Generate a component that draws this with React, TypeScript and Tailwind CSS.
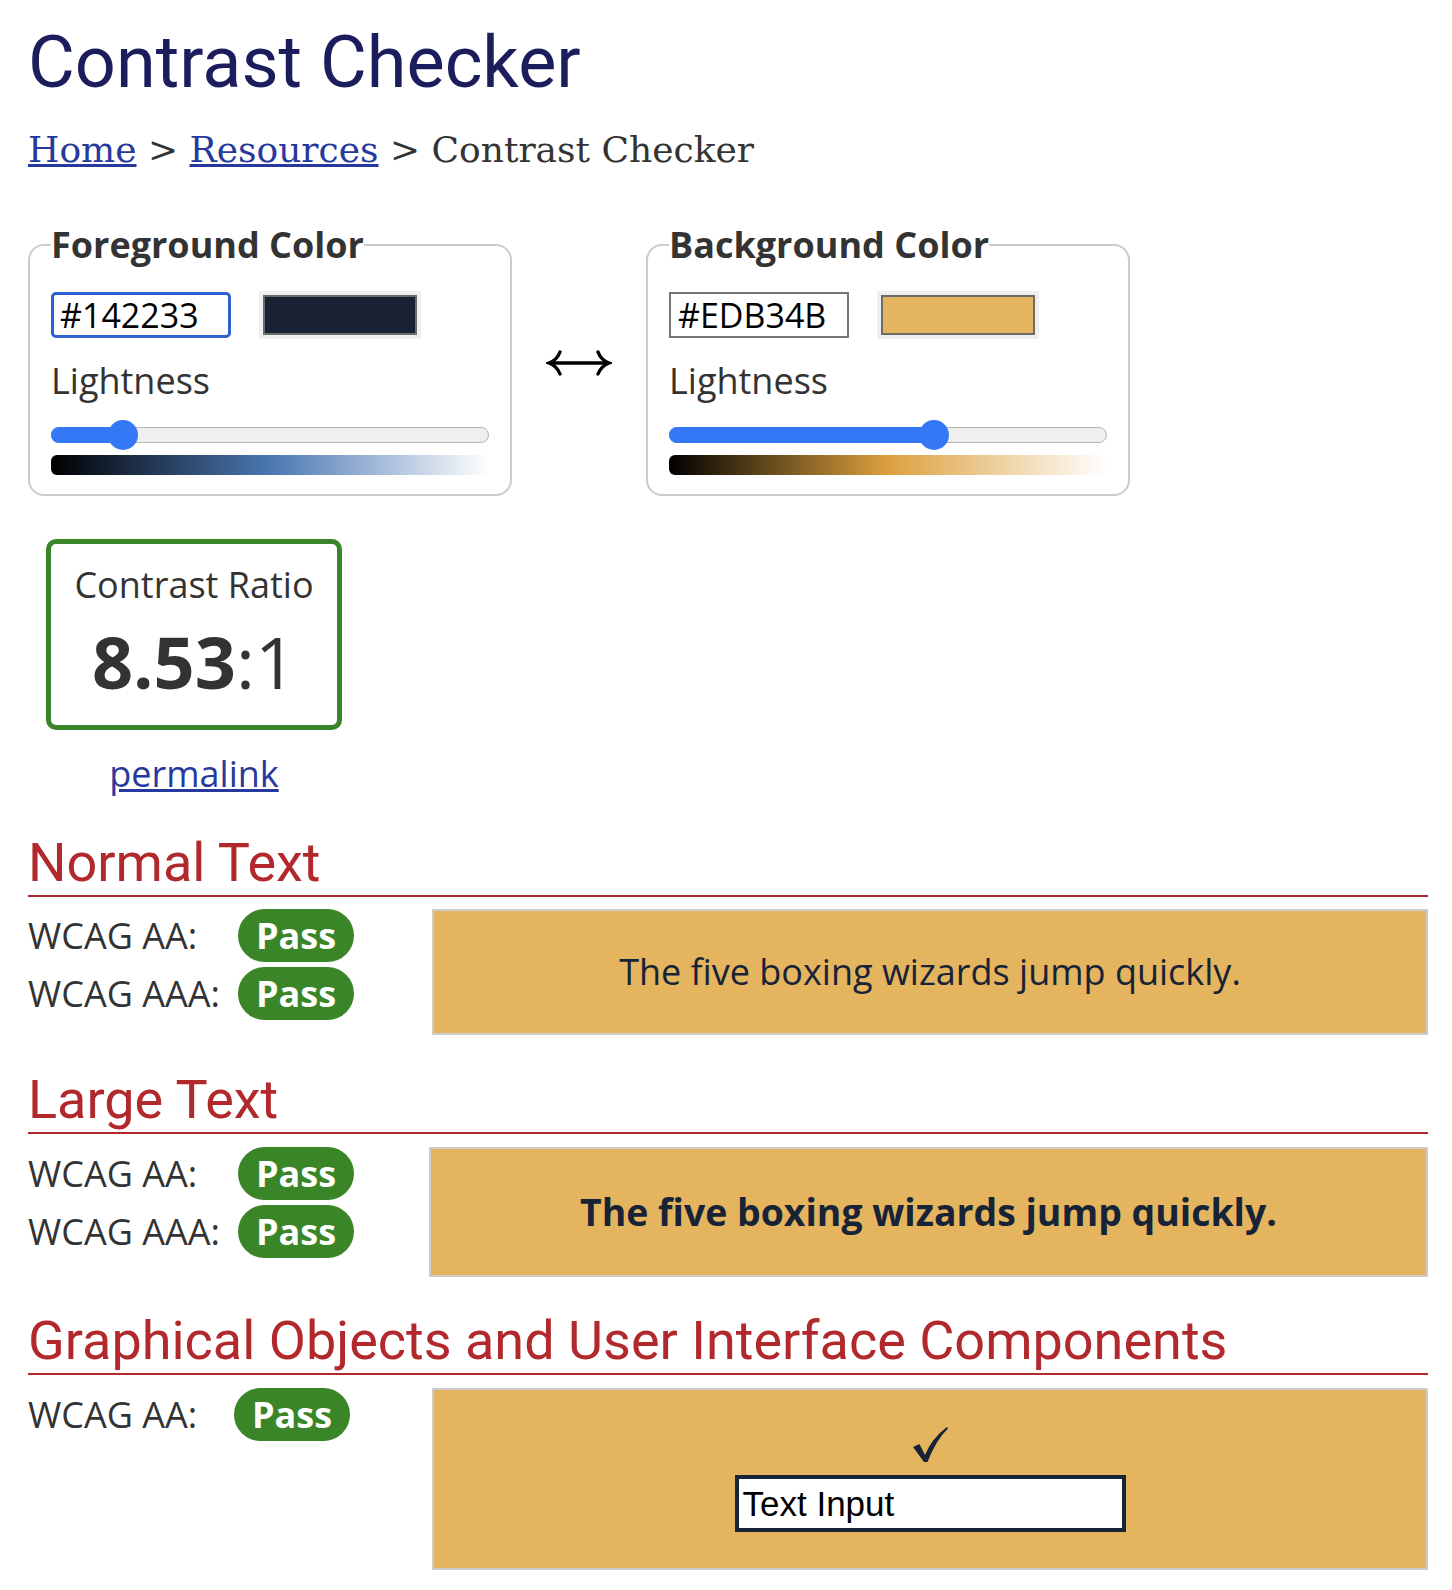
import React from 'react';

const fg = { hex: '#142233', swatch: '#182233', light: 0.139 };
const bg = { hex: '#EDB34B', swatch: '#e5b45f', light: 0.612 };

function Slider({ value }: { value: number }) {
  // track is 439px wide, thumb is 30px
  const center = 15 + (439 - 30) * value;
  return (
    <div className="relative h-[30px] w-full">
      <div className="absolute left-0 right-0 top-[7px] h-[16px] rounded-full border border-[#b4b4b4] bg-[#efefef]" />
      <div className="absolute left-0 top-[7px] h-[16px] rounded-full bg-[#3478f6]" style={{ width: center + 4 }} />
      <div className="absolute top-0 h-[30px] w-[30px] rounded-full bg-[#3478f6]" style={{ left: center - 15 }} />
    </div>
  );
}

function ArrowBoth() {
  return (
    <svg width="66" height="28" viewBox="0 0 66 28" fill="none" stroke="#000" strokeWidth="3.4" strokeLinecap="round">
      <path d="M4 14 H62" />
      <path d="M14 3 Q11 11 3 14 Q11 17 14 25" />
      <path d="M52 3 Q55 11 63 14 Q55 17 52 25" />
    </svg>
  );
}

function Check() {
  return (
    <svg width="38" height="37" viewBox="0 0 38 37">
      <path d="M2 21 L8.5 18 L14 29 Q21 12 36 1 L37 2.5 Q25 14 16.5 36 L13 36 Z" fill="#172336" />
    </svg>
  );
}

function Pass() {
  return (
    <span className="inline-flex h-[53px] items-center rounded-full bg-[#3a8527] px-[18px] text-[36px] font-bold leading-none text-white">
      Pass
    </span>
  );
}

function Row({ label, labelW }: { label: string; labelW: string }) {
  return (
    <div className="flex h-[53px] items-center">
      <span className={labelW}>{label}</span>
      <Pass />
    </div>
  );
}

function Heading({ children }: { children: React.ReactNode }) {
  return (
    <h2 className="border-b-2 border-[#b2292d] pb-[2px] font-['Roboto',sans-serif] text-[54px] leading-[60px] text-[#b2292d]">
      {children}
    </h2>
  );
}

export default function App() {
  return (
    <div className="min-h-screen bg-white pl-[28px] pr-[24px] pb-[20px] font-['Open_Sans',sans-serif] text-[36px] leading-[40px] text-[#333]">
      <h1 className="pt-[27px] font-['Roboto',sans-serif] text-[72px] leading-[72px] text-[#1b1d5c]">Contrast Checker</h1>

      <nav className="mt-[31px] font-['DejaVu_Serif',serif] text-[36px] leading-[40px] text-[#333]">
        <a className="text-[#27399c] underline" href="#">Home</a> &gt;{' '}
        <a className="text-[#27399c] underline" href="#">Resources</a> &gt; Contrast Checker
      </nav>

      <div className="mt-[55px] flex items-center gap-[34px]">
        <ColorBox title="Foreground Color" c={fg} focused gradient="bg-[linear-gradient(to_right,#000,#4a77b2,#fff)]" />
        <div className="pt-[4px]">
          <ArrowBoth />
        </div>
        <ColorBox title="Background Color" c={bg} gradient="bg-[linear-gradient(to_right,#000,#dca13e,#fff)]" />
      </div>

      <div className="ml-[18px] w-[296px]">
        <div className="mt-[43px] rounded-[10px] border-[5px] border-[#3a8527] pt-[21px] pb-[29px] text-center">
          <div>Contrast Ratio</div>
          <div className="mt-[21px] text-[72px] leading-[70px]">
            <span className="font-bold">8.53</span>:1
          </div>
        </div>
        <div className="mt-[24px] text-center">
          <a className="text-[#27399c] underline" href="#">permalink</a>
        </div>
      </div>

      <section className="mt-[39px]">
        <Heading>Normal Text</Heading>
        <div className="mt-[12px] flex items-start">
          <div className="flex w-[404px] shrink-0 flex-col gap-[5px]">
            <Row label="WCAG AA:" labelW="w-[210px]" />
            <Row label="WCAG AAA:" labelW="w-[210px]" />
          </div>
          <div className="flex h-[126px] flex-1 items-center justify-center border-2 border-[#cccccc] bg-[#e5b45f] text-[36px] text-[#172336]">
            The five boxing wizards jump quickly.
          </div>
        </div>
      </section>

      <section className="mt-[35px]">
        <Heading>Large Text</Heading>
        <div className="mt-[13px] flex items-start">
          <div className="flex w-[401px] shrink-0 flex-col gap-[5px]">
            <Row label="WCAG AA:" labelW="w-[210px]" />
            <Row label="WCAG AAA:" labelW="w-[210px]" />
          </div>
          <div className="flex h-[130px] flex-1 items-center justify-center border-2 border-[#cccccc] bg-[#e5b45f] text-[37.4px] font-bold text-[#172336]">
            The five boxing wizards jump quickly.
          </div>
        </div>
      </section>

      <section className="mt-[34px]">
        <Heading>Graphical Objects and User Interface Components</Heading>
        <div className="mt-[13px] flex items-start">
          <div className="flex w-[404px] shrink-0 flex-col">
            <Row label="WCAG AA:" labelW="w-[206px]" />
          </div>
          <div className="flex h-[182px] flex-1 flex-col items-center justify-center gap-[12px] border-2 border-[#cccccc] bg-[#e5b45f]">
            <Check />
            <div className="flex h-[57px] w-[391px] items-center border-[4px] border-[#172336] bg-white px-[4px] font-['Liberation_Sans',Arial,sans-serif] text-[35px] text-black">
              Text Input
            </div>
          </div>
        </div>
      </section>
    </div>
  );
}

function ColorBox({
  title,
  c,
  focused,
  gradient,
}: {
  title: string;
  c: { hex: string; swatch: string; light: number };
  focused?: boolean;
  gradient: string;
}) {
  return (
    <fieldset className="w-[484px] rounded-[16px] border-2 border-[#cccccc] px-[21px] pb-[19px]">
      <legend className="font-bold leading-[40px] text-[#333]">{title}</legend>
      <div className="mt-[26px] flex h-[48px] items-center gap-[28px]">
        <div
          className={
            focused
              ? 'flex h-[46px] w-[180px] items-center rounded-[5px] border-[3px] border-[#2d62d0] px-[6px] text-[34px] text-black'
              : 'flex h-[46px] w-[180px] items-center border-2 border-[#767676] px-[7px] text-[34px] text-black'
          }
        >
          {c.hex}
        </div>
        <div className="h-[48px] w-[162px] bg-[#efefef] p-[4px]">
          <div className="h-full w-full border-2 border-[#6b6b6b]" style={{ background: c.swatch }} />
        </div>
      </div>
      <div className="mt-[22px]">Lightness</div>
      <div className="mt-[19px]">
        <Slider value={c.light} />
      </div>
      <div className={`mt-[5px] h-[20px] rounded-l-[6px] ${gradient}`} />
    </fieldset>
  );
}
